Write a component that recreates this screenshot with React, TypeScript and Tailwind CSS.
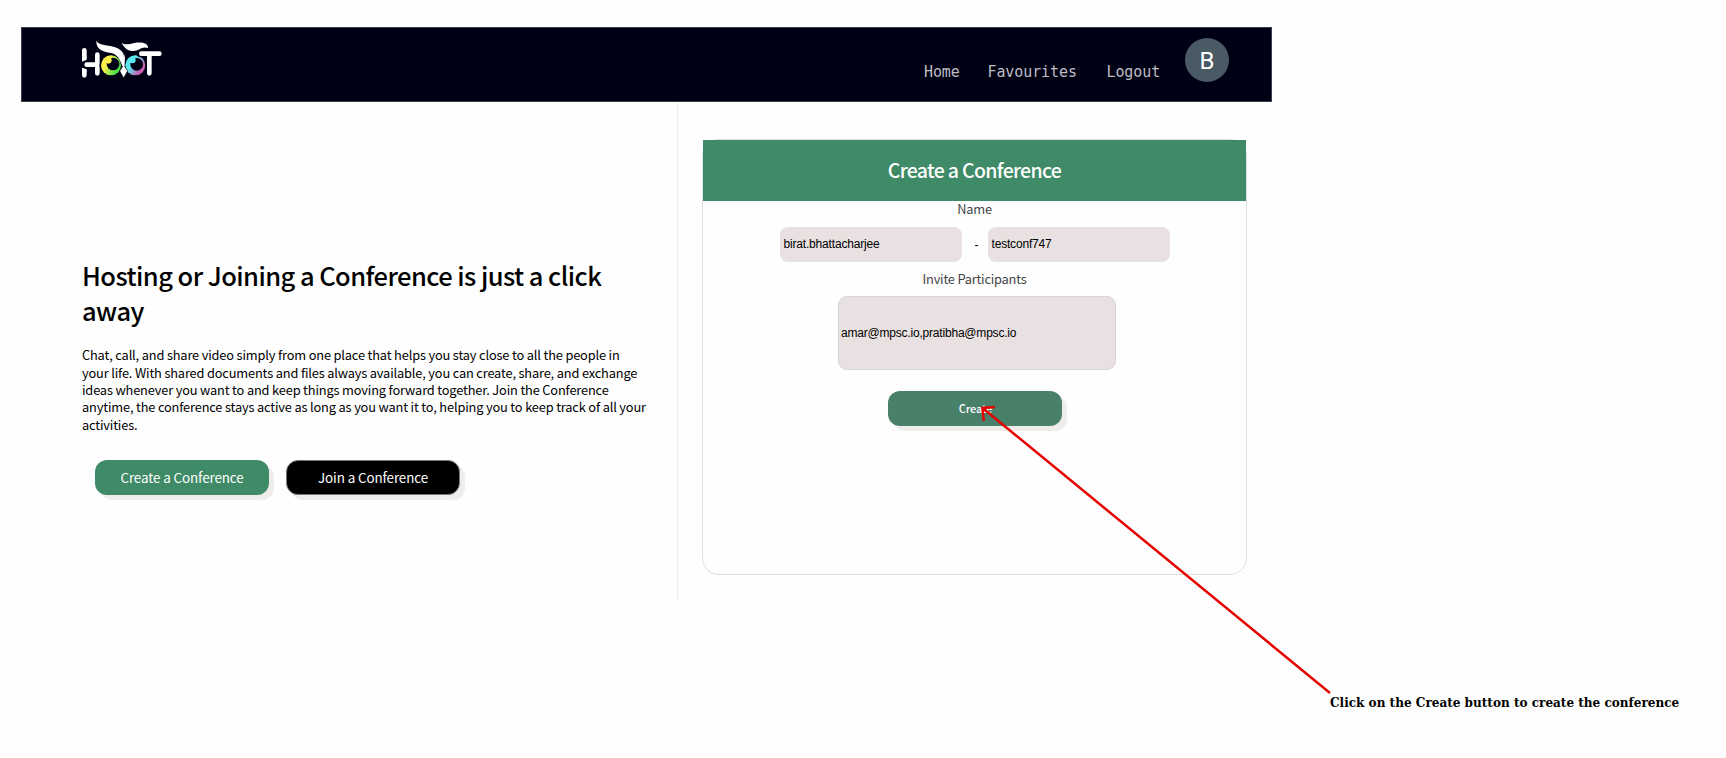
function Logo() {
  return (
    <svg width="110" height="60" viewBox="0 0 330 180" aria-label="HOOT">
      <defs>
        <linearGradient id="leftEye" x1="0" y1="0.2" x2="1" y2="0.7">
          <stop offset="0.3" stopColor="#fdf04a" />
          <stop offset="0.85" stopColor="#4be04a" />
        </linearGradient>
        <linearGradient id="rightEye" x1="0.1" y1="0.2" x2="0.9" y2="0.8">
          <stop offset="0.35" stopColor="#5ce6ee" />
          <stop offset="0.85" stopColor="#c75fb4" />
        </linearGradient>
      </defs>
      <g stroke="#fff" strokeWidth="14" strokeLinecap="round" fill="none">
        <path d="M43 61V82M43 124V136M82 74V130M50 104H82" />
      </g>
      <path d="M36 80H50V89L36 95ZM36 113L50 118V126H36Z" fill="#fff" />
      <circle cx="124" cy="106" r="35" fill="#000014" />
      <circle cx="123" cy="106" r="30" fill="url(#leftEye)" />
      <circle cx="129" cy="102" r="19" fill="#000014" />
      <circle cx="115" cy="91" r="10" fill="#fdf04a" />
      <circle cx="196" cy="106" r="30" fill="url(#rightEye)" />
      <circle cx="200" cy="103" r="19" fill="#000014" />
      <circle cx="187" cy="90" r="10" fill="#5ce6ee" />
      <path d="M212 71H268M238 71V130" stroke="#000014" strokeWidth="22" strokeLinecap="round" />
      <path d="M214 71H268M238 71V130" stroke="#fff" strokeWidth="14" strokeLinecap="round" />
      <path
        d="M79 32C88 46 108 44 130 50C152 56 163 66 162 84L159 114C151 88 142 74 124 69C96 64 78 58 79 32Z"
        fill="#fff"
      />
      <path
        d="M155 38C164 46 176 43 193 39C214 35 235 39 234 54C222 50 214 54 204 60C184 68 165 60 155 38Z"
        fill="#fff"
      />
      <path d="M161 104L173 123L161 144L149 123Z" fill="#fff" stroke="#000014" strokeWidth="2" />
      <path d="M165 72L164 108L158 108L157 96Z" fill="#fff" />
    </svg>
  );
}

function NavBar() {
  return (
    <header className="flex h-[75px] w-[1251px] border border-[#3c3c4a] bg-[#000014]">
      <div className="ml-12 mt-0.5">
        <Logo />
      </div>
      <nav className="ml-auto flex pt-[34px] font-['DejaVu_Sans_Mono',monospace] text-[15px] leading-5 tracking-[-0.1px] text-[#bdbdc2]">
        <a className="w-[63.5px]">Home</a>
        <a className="w-[119px]">Favourites</a>
        <a className="w-[78.5px]">Logout</a>
      </nav>
      <div className="mr-[42px] mt-2.5 flex size-11 items-center justify-center rounded-full bg-[#495a64] pt-px font-[Roboto,sans-serif] text-[24px] text-white">
        B
      </div>
    </header>
  );
}

function Intro() {
  return (
    <section className="h-[499px] w-[657px] border-r border-[#ececec] pl-[61px] pt-[155px] text-black">
      <h1 className="whitespace-nowrap text-[25.5px] font-medium leading-[35px] tracking-[-0.56px]">
        Hosting or Joining a Conference is just a click
        <br />
        away
      </h1>
      <p className="mt-[19.3px] whitespace-nowrap text-[12.8px] leading-[17.33px] tracking-[-0.155px]">
        Chat, call, and share video simply from one place that helps you stay close to all the people in
        <br />
        your life. With shared documents and files always available, you can create, share, and exchange
        <br />
        ideas whenever you want to and keep things moving forward together. Join the Conference
        <br />
        anytime, the conference stays active as long as you want it to, helping you to keep track of all your
        <br />
        activities.
      </p>
      <div className="ml-[13px] mt-[27.5px] flex gap-[17px] text-[13.4px] tracking-[-0.1px] text-white">
        <button className="h-[35px] w-[174px] rounded-[12px] bg-[#3f8a67] pb-px shadow-[5px_5px_1px_#efedec]">
          Create a Conference
        </button>
        <button className="h-[35px] w-[174px] rounded-[12px] border border-[#777] bg-black pb-px shadow-[5px_5px_1px_#efedec]">
          Join a Conference
        </button>
      </div>
    </section>
  );
}

function ConferenceForm() {
  return (
    <section className="ml-[24px] mt-[37px] h-[436px] w-[545px] rounded-[17px] border border-[#dedede] text-[#444]">
      <h2 className="flex h-[61px] items-center justify-center bg-[#3f8a67] pb-px text-[19.5px] font-medium tracking-[-0.68px] text-white">
        Create a Conference
      </h2>
      <div className="flex flex-col items-center">
        <label className="h-[26px] text-[12.8px] leading-[16px] tracking-[-0.2px]">Name</label>
        <div className="flex items-center font-['Liberation_Sans',sans-serif] text-[12px] tracking-[-0.18px] text-black">
          <div className="flex h-[35px] w-[182px] items-center rounded-[8px] bg-[#e9e1e1] pb-px pl-1">birat.bhattacharjee</div>
          <span className="w-[26px] pl-1 text-center">-</span>
          <div className="flex h-[35px] w-[182px] items-center rounded-[8px] bg-[#e9e1e1] pb-px pl-1">testconf747</div>
        </div>
        <label className="mt-[9px] h-[25px] text-[12.8px] leading-[16px] tracking-[-0.2px]">Invite Participants</label>
        <div className="ml-[5px] flex h-[74px] w-[278px] items-center rounded-[9px] border border-[#d8d5d5] bg-[#e9e1e1] pl-0.5 font-['Liberation_Sans',sans-serif] text-[12px] tracking-[-0.2px] text-black">
          amar@mpsc.io,pratibha@mpsc.io
        </div>
        <button className="mt-[21px] h-[35px] w-[174px] rounded-[12px] bg-[#48806a] pl-[2px] text-[11px] font-medium tracking-[-0.1px] text-white shadow-[5px_5px_1px_#efedec]">
          Create
        </button>
      </div>
    </section>
  );
}

export default function App() {
  return (
    <div className="relative h-[758px] w-[1726px] overflow-hidden bg-[#fefefe] pl-[21px] pt-[27px] font-['Noto_Sans_CJK_SC',sans-serif]">
      <NavBar />
      <main className="flex w-[1251px]">
        <Intro />
        <ConferenceForm />
      </main>
      <svg className="absolute inset-0" width="1726" height="758" fill="none" stroke="#e60000" strokeWidth="2.5">
        <path d="M1330 693L982.5 408M995 407L982.5 408L983.7 421" />
      </svg>
      <p className="absolute left-[1330px] top-[692px] whitespace-nowrap font-['DejaVu_Serif_Condensed','DejaVu_Serif',serif] text-[13.4px] font-bold leading-5 text-black">
        Click on the Create button to create the conference
      </p>
    </div>
  );
}
